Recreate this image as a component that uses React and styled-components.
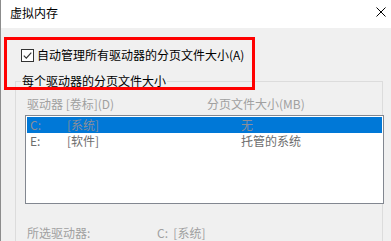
import React from 'react'
import styled, { createGlobalStyle } from 'styled-components'

const GlobalStyle = createGlobalStyle`
  html, body {
    margin: 0;
    padding: 0;
    background: #f0f0f0;
  }
  #root {
    width: 391px;
    height: 241px;
    overflow: hidden;
  }
`

const font = `"Noto Sans CJK SC", "Noto Sans", sans-serif`

const Window = styled.div`
  position: relative;
  width: 391px;
  height: 241px;
  box-sizing: border-box;
  border-left: 1px solid #8c8c8c;
  background: #f0f0f0;
  font-family: ${font};
  font-size: 12px;
  overflow: hidden;
`

const TitleBar = styled.div`
  height: 28px;
  background: #fff;
  display: flex;
  align-items: center;
  justify-content: space-between;
  padding: 0 5px 0 9px;
  box-sizing: border-box;
`

const Title = styled.span`
  font-size: 12px;
  color: #000;
  line-height: 16px;
  margin-top: -3px;
`

const CloseButton = styled.span`
  display: flex;
  width: 10px;
  height: 10px;
  margin-top: -5px;
`

const Body = styled.div`
  padding: 19px 0 0 14px;
`

const CheckRow = styled.label`
  display: flex;
  align-items: center;
  gap: 3px;
  margin-left: 6px;
  color: #000;
  line-height: 16px;
`

const CheckBox = styled.span`
  width: 11px;
  height: 11px;
  border: 1px solid #333;
  background: #fff;
  display: flex;
  align-items: center;
  justify-content: center;
`

const Group = styled.fieldset`
  margin: 10px 0 0 0;
  padding: 0;
  width: 368px;
  height: 200px;
  box-sizing: border-box;
  border: 1px solid #dcdcdc;
  min-width: 0;
`

const GroupLabel = styled.legend`
  margin-left: 5px;
  padding: 0 1px;
  color: #000;
  line-height: 16px;
`

const HeaderRow = styled.div`
  display: flex;
  margin: 7px 0 0 11px;
  color: #a0a0a0;
  line-height: 16px;
`

const HeaderCell = styled.span`
  width: ${p => p.$w}px;
`

const ListBox = styled.div`
  margin: 3px 0 0 9px;
  width: 359px;
  height: 89px;
  box-sizing: border-box;
  border: 1px solid #828790;
  background: #fff;
  padding: 1px;
`

const Row = styled.div`
  display: flex;
  height: 16px;
  align-items: center;
  padding-left: 3px;
  background: ${p => (p.$selected ? '#0078d7' : 'transparent')};
  color: ${p => (p.$selected ? '#8a8f99' : '#6d6d6d')};
`

const Cell = styled.span`
  width: ${p => p.$w}px;
  line-height: 16px;
`

const InfoRow = styled.div`
  display: flex;
  margin: 21px 0 0 11px;
  color: #a0a0a0;
  line-height: 16px;
`

const Highlight = styled.div`
  position: absolute;
  left: 3px;
  top: 37px;
  width: 251px;
  height: 53px;
  box-sizing: border-box;
  border: 3px solid #ff0000;
  pointer-events: none;
`

const drives = [
  { letter: 'C:', label: '[系统]', size: '无', selected: true },
  { letter: 'E:', label: '[软件]', size: '托管的系统' },
]

export default function App() {
  return (
    <>
      <GlobalStyle />
      <Window>
        <TitleBar>
          <Title>虚拟内存</Title>
          <CloseButton>
            <svg width="10" height="10" viewBox="0 0 10 10">
              <path d="M0.5 0.5 L9.5 9.5 M9.5 0.5 L0.5 9.5" stroke="#000" strokeWidth="1" />
            </svg>
          </CloseButton>
        </TitleBar>
        <Body>
          <CheckRow>
            <CheckBox>
              <svg width="9" height="9" viewBox="0 0 9 9">
                <path d="M0.8 4.6 L3.3 7.1 L8.3 1.6" fill="none" stroke="#333" strokeWidth="1.2" />
              </svg>
            </CheckBox>
            自动管理所有驱动器的分页文件大小(A)
          </CheckRow>
          <Group>
            <GroupLabel>每个驱动器的分页文件大小</GroupLabel>
            <HeaderRow>
              <HeaderCell $w={180}>驱动器 [卷标](D)</HeaderCell>
              <HeaderCell>分页文件大小(MB)</HeaderCell>
            </HeaderRow>
            <ListBox>
              {drives.map(d => (
                <Row key={d.letter} $selected={d.selected}>
                  <Cell $w={37}>{d.letter}</Cell>
                  <Cell $w={174}>{d.label}</Cell>
                  <Cell>{d.size}</Cell>
                </Row>
              ))}
            </ListBox>
            <InfoRow>
              <HeaderCell $w={130}>所选驱动器:</HeaderCell>
              <HeaderCell>C:&nbsp;&nbsp;[系统]</HeaderCell>
            </InfoRow>
          </Group>
        </Body>
        <Highlight />
      </Window>
    </>
  )
}
